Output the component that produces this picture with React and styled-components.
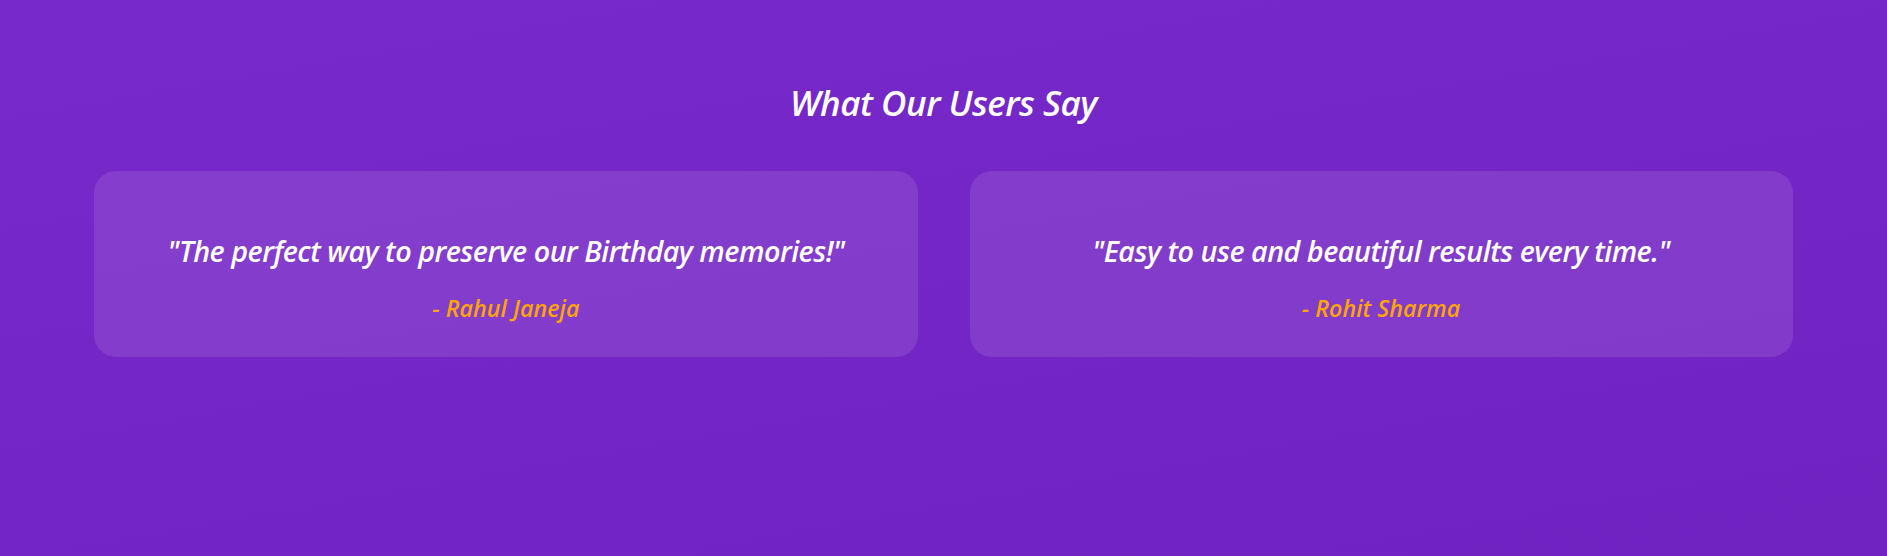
import React from 'react';
import styled, { createGlobalStyle } from 'styled-components';

const GlobalStyle = createGlobalStyle`
  html, body {
    margin: 0;
    padding: 0;
  }
  body {
    font-family: "Open Sans", "Noto Sans", sans-serif;
    background: #7123c2;
  }
`;

// fundo roxo com gradiente leve
const Section = styled.section`
  min-height: 556px;
  box-sizing: border-box;
  padding: 80px 5% 60px;
  background: linear-gradient(170deg, #7829c9 0%, #7123c2 100%);
  color: #fff;
`;

const Title = styled.h2`
  margin: 0 0 45px;
  text-align: center;
  font-size: 35px;
  line-height: 1.3;
  font-style: italic;
  font-weight: 600;
  letter-spacing: -0.5px;
`;

const Grid = styled.div`
  display: grid;
  grid-template-columns: 1fr 1fr;
  gap: 52px;
`;

const Card = styled.div`
  background: rgba(255, 255, 255, 0.1);
  border-radius: 22px;
  height: 186px;
  box-sizing: border-box;
  padding: 60px 30px 30px;
  text-align: center;
`;

const Quote = styled.p`
  margin: 0 0 21px;
  font-size: 28.7px;
  line-height: 1.4;
  font-style: italic;
  font-weight: 600;
  letter-spacing: -0.5px;
`;

const Author = styled.p`
  margin: 0;
  font-size: 23.3px;
  line-height: 1.4;
  font-style: italic;
  font-weight: 600;
  color: #ffa500;
`;

const testimonials = [
  { quote: '"The perfect way to preserve our Birthday memories!"', author: '- Rahul Janeja' },
  { quote: '"Easy to use and beautiful results every time."', author: '- Rohit Sharma' },
];

const App = () => {
  return (
    <>
      <GlobalStyle />
      <Section>
        <Title>What Our Users Say</Title>
        <Grid>
          {testimonials.map((t) => (
            <Card key={t.author}>
              <Quote>{t.quote}</Quote>
              <Author>{t.author}</Author>
            </Card>
          ))}
        </Grid>
      </Section>
    </>
  );
};

export default App;
